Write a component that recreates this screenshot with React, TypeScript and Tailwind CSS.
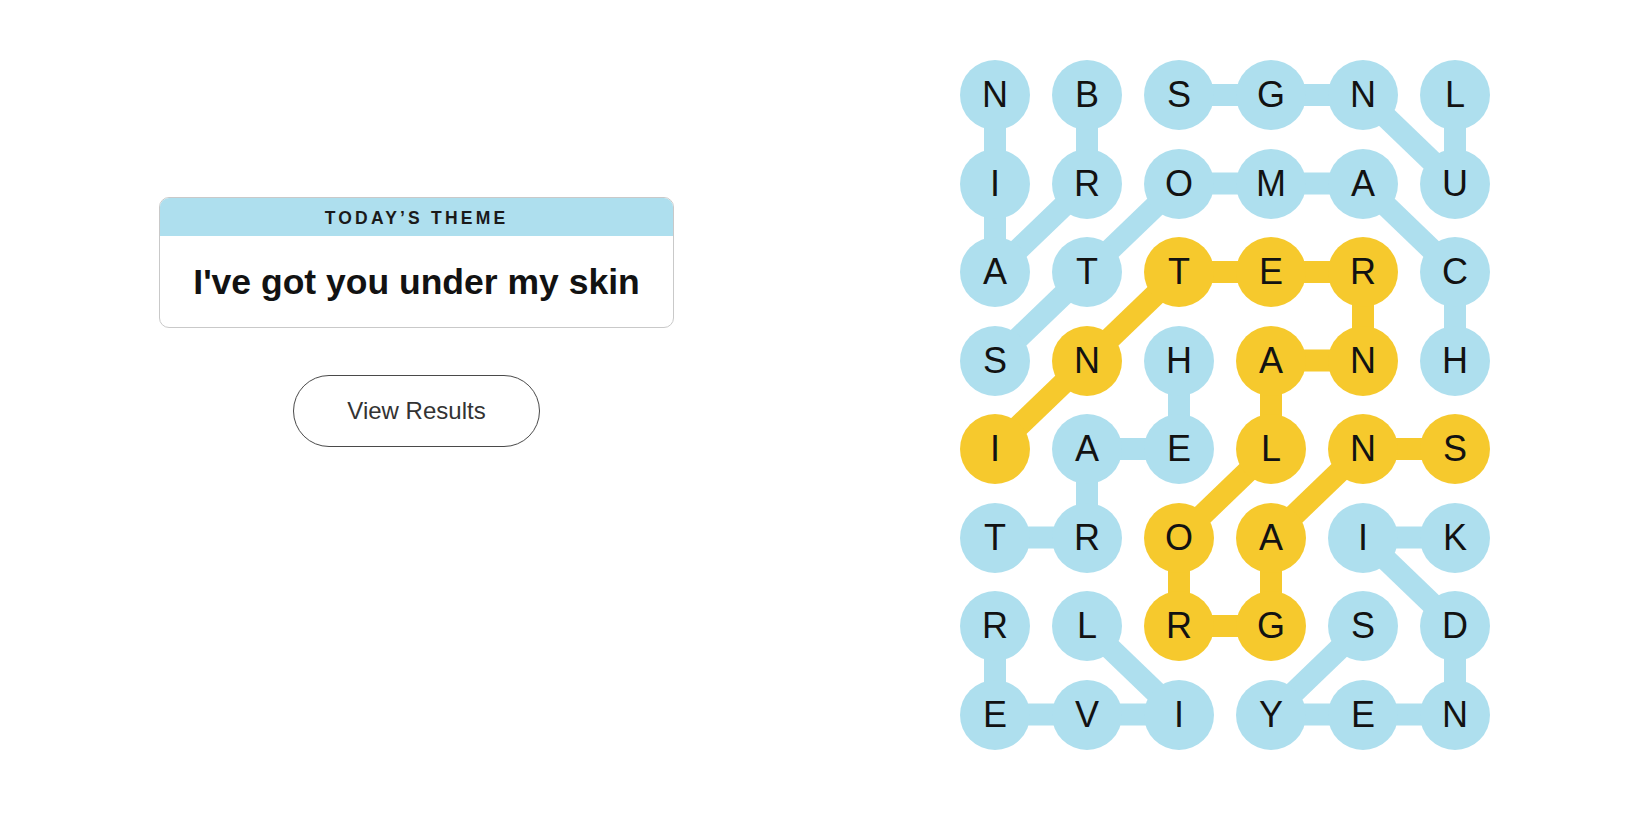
const BLUE = "#aedfee";
const YELLOW = "#f6c92d";

const letters = [
  "NBSGNL",
  "IROMAU",
  "ATTERC",
  "SNHANH",
  "IAELNS",
  "TROAIK",
  "RLRGSD",
  "EVIYEN",
];

// each word: list of [row, col] cells in order
const words: { cells: [number, number][]; gold?: boolean }[] = [
  { cells: [[0, 1], [1, 1], [2, 0], [1, 0], [0, 0]] }, // BRAIN
  { cells: [[0, 5], [1, 5], [0, 4], [0, 3], [0, 2]] }, // LUNGS
  { cells: [[3, 0], [2, 1], [1, 2], [1, 3], [1, 4], [2, 5], [3, 5]] }, // STOMACH
  { cells: [[3, 2], [4, 2], [4, 1], [5, 1], [5, 0]] }, // HEART
  { cells: [[6, 1], [7, 2], [7, 1], [7, 0], [6, 0]] }, // LIVER
  { cells: [[5, 5], [5, 4], [6, 5], [7, 5], [7, 4], [7, 3], [6, 4]] }, // KIDNEYS
  {
    gold: true,
    cells: [
      [4, 0], [3, 1], [2, 2], [2, 3], [2, 4], [3, 4], [3, 3],
      [4, 3], [5, 2], [6, 2], [6, 3], [5, 3], [4, 4], [4, 5],
    ],
  }, // INTERNALORGANS
];

const goldSet = new Set(
  words.filter((w) => w.gold).flatMap((w) => w.cells.map(([r, c]) => `${r}-${c}`))
);

const COL = 92;
const ROW = 88.5;
const R = 35;

function Board() {
  return (
    <div className="relative">
      <svg
        className="absolute left-0 top-0"
        width={530}
        height={690}
        viewBox="0 0 530 690"
      >
        {words.map((w, wi) =>
          w.cells.slice(1).map(([r, c], i) => {
            const [pr, pc] = w.cells[i];
            return (
              <line
                key={`${wi}-${i}`}
                x1={pc * COL + R}
                y1={pr * ROW + R}
                x2={c * COL + R}
                y2={r * ROW + R}
                stroke={w.gold ? YELLOW : BLUE}
                strokeWidth={22}
              />
            );
          })
        )}
      </svg>
      <div className="relative grid grid-cols-[repeat(6,70px)] gap-x-[22px] gap-y-[18.5px]">
        {letters.map((row, r) =>
          row.split("").map((ch, c) => (
            <div
              key={`${r}-${c}`}
              className={`w-[70px] h-[70px] rounded-full flex items-center justify-center text-[36px] text-[#121212] leading-none ${
                goldSet.has(`${r}-${c}`) ? "bg-[#f6c92d]" : "bg-[#aedfee]"
              }`}
            >
              {ch}
            </div>
          ))
        )}
      </div>
    </div>
  );
}

export default function App() {
  return (
    <div className="w-[1650px] h-[825px] bg-white flex font-['Liberation_Sans',Arial,sans-serif]">
      {/* Left: theme + results */}
      <div className="w-[833px] flex flex-col items-center pt-[197px]">
        <div className="w-[515px] h-[131px] rounded-[10px] border border-[#c9c9c9] overflow-hidden flex flex-col">
          <div className="h-[38px] bg-[#aedfee] flex items-center justify-center pt-[3px] text-[17.5px] font-bold tracking-[3.2px] text-[#1a1a1a]">
            TODAY’S THEME
          </div>
          <div className="flex-1 flex items-center justify-center text-[35.5px] font-bold text-[#121212] pt-[2px]">
            I've got you under my skin
          </div>
        </div>
        <button className="mt-[47px] w-[247px] h-[72px] rounded-full border border-[#4a4a4a] text-[24px] text-[#333]">
          View Results
        </button>
      </div>

      {/* Right: board */}
      <div className="pl-[127px] pt-[60px]">
        <Board />
      </div>
    </div>
  );
}
